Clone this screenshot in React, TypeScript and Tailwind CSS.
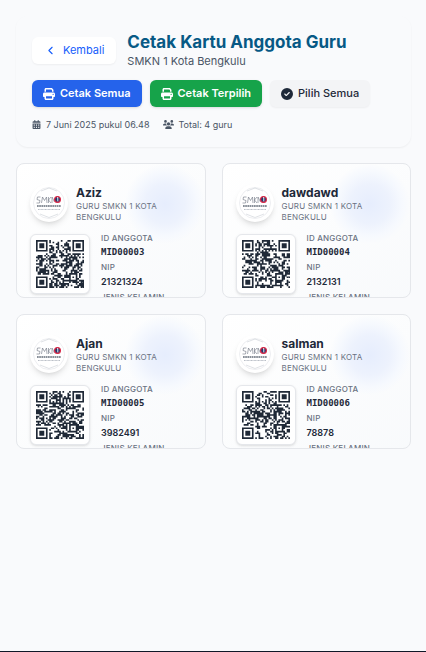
import React from "react";
import { FaCalendarDays, FaCircleCheck, FaPrint, FaUsers } from "react-icons/fa6";
import { ChevronLeft } from "lucide-react";

type Teacher = { name: string; id: string; nip: string };

const teachers: Teacher[] = [
  { name: "Aziz", id: "MID00003", nip: "21321324" },
  { name: "dawdawd", id: "MID00004", nip: "2132131" },
  { name: "Ajan", id: "MID00005", nip: "3982491" },
  { name: "salman", id: "MID00006", nip: "78878" },
];

const SIZE = 29;

// Ring pattern of a finder or alignment square; null when the cell is outside it.
function ring(x: number, y: number, cx: number, cy: number, reach: number): boolean | null {
  const d = Math.max(Math.abs(x - cx), Math.abs(y - cy));
  if (d > reach) return null;
  if (reach === 4) return d === 3 || d <= 1;
  return d !== 1;
}

function qrPath(text: string): string {
  let seed = 7;
  for (const c of text) seed = (seed * 31 + c.charCodeAt(0)) >>> 0;
  let d = "";
  for (let y = 0; y < SIZE; y++) {
    for (let x = 0; x < SIZE; x++) {
      seed = (Math.imul(seed, 1664525) + 1013904223) >>> 0;
      const fixed =
        ring(x, y, 3, 3, 4) ??
        ring(x, y, SIZE - 4, 3, 4) ??
        ring(x, y, 3, SIZE - 4, 4) ??
        ring(x, y, SIZE - 7, SIZE - 7, 2);
      const timing = x === 6 ? y % 2 === 0 : y === 6 ? x % 2 === 0 : null;
      if (fixed ?? timing ?? (seed >>> 16) % 100 < 53) d += `M${x} ${y}h1v1h-1z`;
    }
  }
  return d;
}

function SchoolLogo() {
  return (
    <div className="size-[38px] shrink-0 rounded-full bg-white p-0.5 shadow-md">
      <svg viewBox="0 0 34 34" className="size-full" role="img" aria-label="Logo SMKN 1 Kota Bengkulu">
        <circle cx="17" cy="17" r="15.500" fill="#fff" stroke="#e8eaed" strokeWidth="0.800" />
        <path d="M8 28l9 3.500 9-3.500M9 5l8-3 8 3" fill="none" stroke="#d1d5db" strokeWidth="0.700" />
        <path
          d="M8.500 11H5.500l-.5 2.500 3 1-.5 2.500H4.500M9.500 17l1-6 2 3.500 2-3.500 .5 6M16.500 11v6M19 11l-2.500 3 2.500 3M20 17v-6l2.500 5"
          fill="none"
          stroke="#6b7280"
          strokeWidth="0.600"
        />
        <circle cx="25.500" cy="13.500" r="2.900" fill="#1e3a6e" stroke="#dc2645" strokeWidth="1.200" />
        <path d="M25 12l.8-.6v4" fill="none" stroke="#fff" strokeWidth="0.900" />
        <path d="M5 20h24" stroke="#4b5563" strokeWidth="2.200" strokeDasharray="1.700 0.500" opacity="0.650" />
        <path d="M6 23.500h22" stroke="#9ca3af" strokeWidth="0.700" strokeDasharray="1 0.400" />
      </svg>
    </div>
  );
}

function MemberCard({ teacher }: { teacher: Teacher }) {
  return (
    <article className="relative h-[135px] overflow-hidden rounded-lg border border-gray-200 bg-linear-to-br from-white to-slate-50 px-[13px] pt-5">
      <div className="absolute top-0 right-0 size-20 rounded-full bg-[radial-gradient(circle,#e6edfd_0%,#edf2fd_35%,#f6f9fe_56%,transparent_71%)]" />
      <div className="relative flex gap-2">
        <SchoolLogo />
        <div className="min-w-0">
          <h2 className="text-[12px] leading-[17px] font-bold text-gray-800">{teacher.name}</h2>
          <p className="text-[8px] leading-[11px] tracking-wide text-gray-500 uppercase">Guru SMKN 1 Kota Bengkulu</p>
        </div>
      </div>
      <div className="relative mt-[7px] flex gap-[11px]">
        <div className="mt-1 size-[60px] shrink-0 rounded-md border border-gray-200 bg-white p-[5px] shadow-sm">
          <svg viewBox={`0 0 ${SIZE} ${SIZE}`} className="size-full" role="img" aria-label={`Kode QR ${teacher.id}`}>
            <path d={qrPath(teacher.id)} fill="#1f2937" />
          </svg>
        </div>
        <dl className="text-[8px] leading-4 font-medium text-gray-500 uppercase">
          <dt className="tracking-wide">ID Anggota</dt>
          <dd className="font-['DejaVu_Sans_Mono',monospace] text-[9px] leading-[13px] font-bold text-gray-800">{teacher.id}</dd>
          <dt className="tracking-wide">NIP</dt>
          <dd className="text-[9px] leading-[13px] font-semibold text-gray-800">{teacher.nip}</dd>
          <dt className="pt-px tracking-wide">Jenis Kelamin</dt>
        </dl>
      </div>
    </article>
  );
}

export default function App() {
  return (
    <div className="flex min-h-screen flex-col bg-[#f9fafc] font-['Inter',sans-serif]">
      <main className="flex-1 pt-4 pr-[15px] pb-4 pl-4">
        <header className="mb-4 rounded-xl p-4 shadow-xs">
          <div className="flex items-center gap-[11px]">
            <button type="button" className="flex h-[27px] shrink-0 items-center gap-1.5 rounded-md bg-white px-3 text-[11px] text-blue-600 shadow-xs">
              <ChevronLeft size={13} />
              Kembali
            </button>
            <div className="min-w-0">
              <h1 className="text-[17px] leading-[21px] font-bold whitespace-nowrap text-[#075985]">Cetak Kartu Anggota Guru</h1>
              <p className="text-[11px] leading-4 text-gray-600">SMKN 1 Kota Bengkulu</p>
            </div>
          </div>
          <div className="mt-[11px] flex flex-wrap gap-2 text-[11px] font-semibold">
            <button type="button" className="flex h-[27px] items-center gap-[5px] rounded-md bg-[#2563eb] px-[11px] text-white shadow-sm">
              <FaPrint size={12} />
              Cetak Semua
            </button>
            <button type="button" className="flex h-[27px] items-center gap-[5px] rounded-md bg-[#16a34a] px-[11px] text-white shadow-sm">
              <FaPrint size={12} />
              Cetak Terpilih
            </button>
            <button type="button" className="flex h-[27px] items-center gap-[5px] rounded-md bg-gray-100 px-[11px] font-medium text-gray-800 shadow-xs">
              <FaCircleCheck size={12} />
              Pilih Semua
            </button>
          </div>
          <div className="mt-[11px] flex gap-[13px] text-[9px] leading-[13px] text-gray-600">
            <span className="flex items-center gap-[5px]">
              <FaCalendarDays size={9} />7 Juni 2025 pukul 06.48
            </span>
            <span className="flex items-center gap-[5px]">
              <FaUsers size={11} />
              Total: 4 guru
            </span>
          </div>
        </header>
        <section className="grid grid-cols-2 gap-4">
          {teachers.map((t) => (
            <MemberCard key={t.id} teacher={t} />
          ))}
        </section>
      </main>
      <footer className="border-t border-gray-900" />
    </div>
  );
}
